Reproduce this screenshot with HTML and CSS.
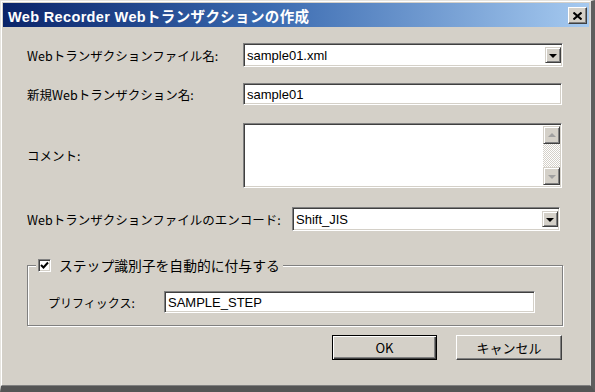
FILE: index.html
```html
<!DOCTYPE html>
<html lang="ja">
<head>
<meta charset="utf-8">
<link rel="stylesheet" href="styles.css">
</head>
<body>
<div class="window">
  <div class="frame">
    <div class="titlebar">
      <span class="title">Web Recorder Webトランザクションの作成</span>
      <span class="close"><svg width="9" height="8" viewBox="0 0 9 8"><path d="M0.5 0.5 L8.5 7.5 M8.5 0.5 L0.5 7.5" stroke="#000" stroke-width="2" fill="none"/></svg></span>
    </div>
    <div class="content">
      <div class="row r1">
        <span class="lbl lbl-main">Webトランザクションファイル名:</span>
        <div class="field combo w320"><span class="val">sample01.xml</span><span class="dd"><i class="tri"></i></span></div>
      </div>
      <div class="row r2">
        <span class="lbl lbl-main">新規Webトランザクション名:</span>
        <div class="field edit w319"><span class="val">sample01</span></div>
      </div>
      <div class="row r3">
        <span class="lbl lbl-main">コメント:</span>
        <div class="field memo w319">
          <div class="memo-text"></div>
          <div class="vscroll">
            <span class="sbtn"><i class="tri-up"></i></span>
            <span class="track"></span>
            <span class="sbtn"><i class="tri-down"></i></span>
          </div>
        </div>
      </div>
      <div class="row r4">
        <span class="lbl lbl-enc">Webトランザクションファイルのエンコード:</span>
        <div class="field combo w268"><span class="val">Shift_JIS</span><span class="dd"><i class="tri"></i></span></div>
      </div>
      <fieldset class="group">
        <legend class="legend">
          <span class="check"><svg width="9" height="9" viewBox="0 0 9 9"><path d="M1 4 L3.5 6.5 L8 1.5" stroke="#000" stroke-width="2" fill="none"/></svg></span>
          <span class="legend-text">ステップ識別子を自動的に付与する</span>
        </legend>
        <div class="row prefix-row">
          <span class="lbl lbl-prefix">プリフィックス:</span>
          <div class="field edit w371"><span class="val">SAMPLE_STEP</span></div>
        </div>
      </fieldset>
      <div class="buttons">
        <span class="btn default"><span class="btn-inner">OK</span></span>
        <span class="btn"><span class="btn-inner">キャンセル</span></span>
      </div>
    </div>
  </div>
</div>
</body>
</html>
```
FILE: styles.css
```css
* { box-sizing: border-box; }
html, body { margin: 0; padding: 0; background: #d4d0c8; }
body { width: 595px; height: 392px; overflow: hidden; font-family: "Noto Sans CJK JP", "Liberation Sans", sans-serif; color: #000; }

.window {
  width: 595px;
  height: 392px;
  border-style: solid;
  border-width: 1px 4px 6px 1px;
  border-color: #e6e4df #5e5e5e #555 #e6e4df;
  background: #d4d0c8;
}
.frame {
  height: 100%;
  border-style: solid;
  border-width: 1px 1px 1px 1px;
  border-color: #fff #d8d8d8 #808080 #fff;
  padding: 1px 1px 0 1px;
  display: flex;
  flex-direction: column;
}

.titlebar {
  height: 24px;
  background: linear-gradient(to right, #0a246a 0%, #3a6ab0 45%, #a6caf0 100%);
  display: flex;
  align-items: center;
  justify-content: space-between;
  padding: 0 2px 0 5px;
}
.title {
  color: #fff;
  font-family: "Liberation Sans", "Noto Sans CJK JP", sans-serif;
  font-weight: bold;
  font-size: 14.5px;
  letter-spacing: 0.35px;
  white-space: nowrap;
}
.close {
  width: 19px;
  height: 17px;
  background: #d4d0c8;
  border: 1px solid;
  border-color: #fff #404040 #404040 #fff;
  box-shadow: inset -1px -1px 0 #808080;
  display: flex;
  align-items: center;
  justify-content: center;
  margin-top: 1px;
}

.content {
  padding: 16px 0 0 24px;
  display: flex;
  flex-direction: column;
}

.row { display: flex; align-items: center; }
.r2 { margin-top: 16px; }
.r3 { margin-top: 18px; }
.r4 { margin-top: 19px; }

.lbl { font-size: 12.5px; white-space: nowrap; }
.lbl-main { width: 216px; }
.lbl-enc { width: 265px; }
.lbl-prefix { width: 116px; font-size: 12px; }

.field {
  background: #fff;
  border: 1px solid;
  border-color: #808080 #fff #fff #808080;
  box-shadow: inset 1px 1px 0 #404040, inset -1px -1px 0 #d4d0c8;
  display: flex;
  align-items: center;
  padding: 2px 2px 2px 3px;
}
.val {
  flex: 1;
  font-family: "Liberation Sans", sans-serif;
  font-size: 13px;
  white-space: nowrap;
}
.combo { height: 24px; }
.edit { height: 22px; }
.w320 { width: 320px; }
.w319 { width: 319px; }
.w268 { width: 268px; }
.w371 { width: 371px; }

.dd, .sbtn {
  width: 16px;
  height: 16px;
  background: #d4d0c8;
  border: 1px solid;
  border-color: #d4d0c8 #404040 #404040 #d4d0c8;
  box-shadow: inset 1px 1px 0 #fff, inset -1px -1px 0 #808080;
  display: flex;
  align-items: center;
  justify-content: center;
}
.dd { margin-right: -1px; }
.tri {
  width: 0; height: 0;
  border-left: 4px solid transparent;
  border-right: 4px solid transparent;
  border-top: 4px solid #000;
  margin-top: 1px;
}

.memo { height: 65px; align-items: stretch; padding: 2px 2px 2px 3px; }
.memo-text { flex: 1; }
.vscroll {
  width: 17px;
  display: flex;
  flex-direction: column;
  margin-right: -1px;
}
.vscroll .sbtn { width: 17px; height: 18px; }
.track {
  flex: 1;
  background: repeating-conic-gradient(#d4d0c8 0 25%, #fff 0 50%) 0 0 / 2px 2px;
}
.tri-up, .tri-down {
  width: 0; height: 0;
  border-left: 4px solid transparent;
  border-right: 4px solid transparent;
}
.tri-up { border-bottom: 4px solid #a0a0a0; }
.tri-down { border-top: 4px solid #a0a0a0; margin-top: 1px; }

.group {
  margin: 24px 0 0 0;
  width: 536px;
  padding: 16px 26px 12px 20px;
  border: 1px solid #808080;
  box-shadow: inset 1px 1px 0 #fff, 1px 1px 0 #fff;
  min-width: 0;
}
.legend {
  display: flex;
  align-items: center;
  padding: 0 3px 0 2px;
  margin-left: -12px;
  background: #d4d0c8;
}
.check {
  width: 13px;
  height: 13px;
  background: #fff;
  border: 1px solid;
  border-color: #808080 #fff #fff #808080;
  box-shadow: inset 1px 1px 0 #404040, inset -1px -1px 0 #d4d0c8;
  display: flex;
  align-items: center;
  justify-content: center;
}
.legend-text {
  font-size: 13.8px;
  margin-left: 8px;
  white-space: nowrap;
}

.prefix-row { margin-top: 0; }

.buttons {
  display: flex;
  margin-top: 9px;
  padding-left: 305px;
  gap: 19px;
}
.btn {
  width: 106px;
  height: 25px;
  background: #d4d0c8;
  border: 1px solid;
  border-color: #fff #404040 #404040 #fff;
  box-shadow: inset -1px -1px 0 #808080;
  display: flex;
  align-items: center;
  justify-content: center;
  font-size: 13px;
}
.btn.default {
  width: 105px;
  border: 1px solid #000;
  box-shadow: inset 1px 1px 0 #fff, inset -1px -1px 0 #404040, inset -2px -2px 0 #808080;
}
.btn-inner { white-space: nowrap; }
```
